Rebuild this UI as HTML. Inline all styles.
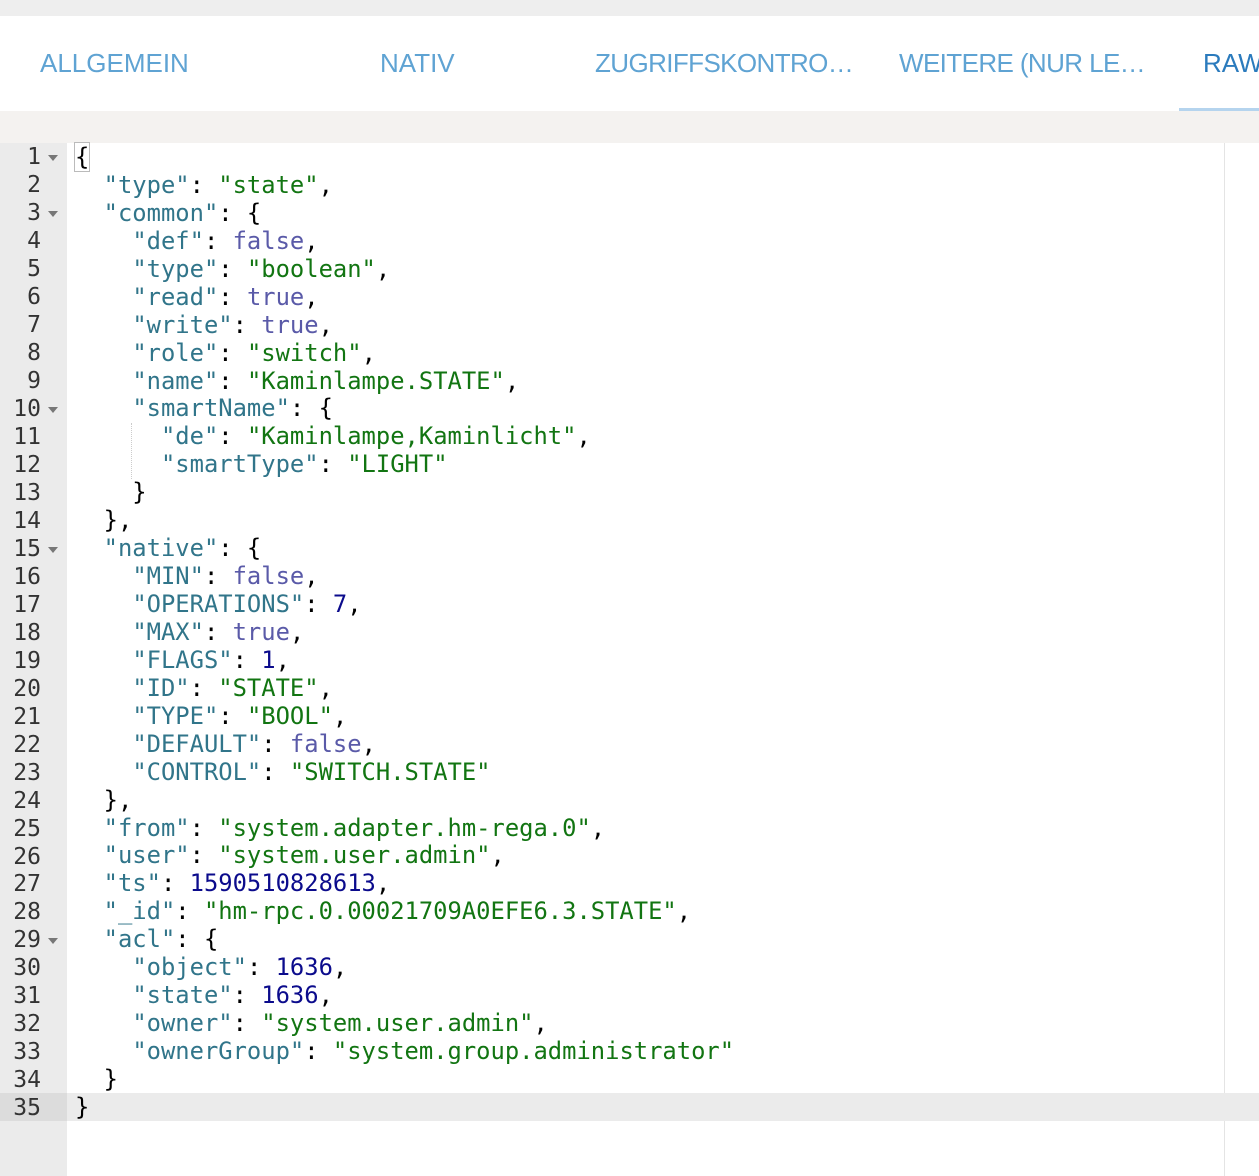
<!DOCTYPE html>
<html><head><meta charset="utf-8"><style>
body{margin:0;width:1259px;height:1176px;overflow:hidden;background:#fff;position:relative;font-family:"Liberation Sans",sans-serif}
.top{position:absolute;left:0;top:0;width:1259px;height:16px;background:#eeeeee}
.tab{position:absolute;top:45px;font-size:26px;color:#5fa3d3;white-space:nowrap;line-height:36px}
.band{position:absolute;left:0;top:111px;width:1259px;height:32px;background:#f4f2f0}
.ind{position:absolute;left:1179px;top:108px;width:80px;height:3px;background:#b5d4ee}
.gut{position:absolute;left:0;top:143px;width:67px;height:1033px;background:#ebebeb}
.margin{position:absolute;left:1224px;top:143px;width:1px;height:1033px;background:#e4e4e4}
.act{position:absolute;left:67px;top:1093px;width:1192px;height:28px;background:#ebebeb}
.actg{position:absolute;left:0;top:1093px;width:67px;height:28px;background:#dcdcdc}
.ln{position:absolute;left:0;width:41px;text-align:right;font-family:"DejaVu Sans Mono",monospace;font-size:23px;color:#333;line-height:28px}
.fold{position:absolute;left:48px;width:0;height:0;border-left:5px solid transparent;border-right:5px solid transparent;border-top:6px solid #777}
pre{position:absolute;left:75px;top:144px;margin:0;font-family:"DejaVu Sans Mono",monospace;font-size:23.8px;line-height:27.94px;color:#000}
.k{color:#31758a}.s{color:#127512}.b{color:#5a5aa8}.n{color:#0b0b8c}
.guide{position:absolute;left:131px;top:423px;height:56px;border-left:1px dotted #ccc}
</style></head><body>
<div class="top"></div>
<div class="tab" style="left:40px">ALLGEMEIN</div>
<div class="tab" style="left:380px">NATIV</div>
<div class="tab" style="left:595px;letter-spacing:-0.6px">ZUGRIFFSKONTRO…</div>
<div class="tab" style="left:899px;letter-spacing:-0.6px">WEITERE (NUR LE…</div>
<div class="tab" style="left:1203px;color:#2b7bbd">RAW</div>
<div class="ind"></div>
<div class="band"></div>
<div class="gut"></div>
<div class="margin"></div>
<div class="act"></div><div class="actg"></div>
<div class="guide"></div>
<pre><span style="outline:1px solid #bbb">{</span>
  <span class="k">"type"</span>: <span class="s">"state"</span>,
  <span class="k">"common"</span>: {
    <span class="k">"def"</span>: <span class="b">false</span>,
    <span class="k">"type"</span>: <span class="s">"boolean"</span>,
    <span class="k">"read"</span>: <span class="b">true</span>,
    <span class="k">"write"</span>: <span class="b">true</span>,
    <span class="k">"role"</span>: <span class="s">"switch"</span>,
    <span class="k">"name"</span>: <span class="s">"Kaminlampe.STATE"</span>,
    <span class="k">"smartName"</span>: {
      <span class="k">"de"</span>: <span class="s">"Kaminlampe,Kaminlicht"</span>,
      <span class="k">"smartType"</span>: <span class="s">"LIGHT"</span>
    }
  },
  <span class="k">"native"</span>: {
    <span class="k">"MIN"</span>: <span class="b">false</span>,
    <span class="k">"OPERATIONS"</span>: <span class="n">7</span>,
    <span class="k">"MAX"</span>: <span class="b">true</span>,
    <span class="k">"FLAGS"</span>: <span class="n">1</span>,
    <span class="k">"ID"</span>: <span class="s">"STATE"</span>,
    <span class="k">"TYPE"</span>: <span class="s">"BOOL"</span>,
    <span class="k">"DEFAULT"</span>: <span class="b">false</span>,
    <span class="k">"CONTROL"</span>: <span class="s">"SWITCH.STATE"</span>
  },
  <span class="k">"from"</span>: <span class="s">"system.adapter.hm-rega.0"</span>,
  <span class="k">"user"</span>: <span class="s">"system.user.admin"</span>,
  <span class="k">"ts"</span>: <span class="n">1590510828613</span>,
  <span class="k">"_id"</span>: <span class="s">"hm-rpc.0.00021709A0EFE6.3.STATE"</span>,
  <span class="k">"acl"</span>: {
    <span class="k">"object"</span>: <span class="n">1636</span>,
    <span class="k">"state"</span>: <span class="n">1636</span>,
    <span class="k">"owner"</span>: <span class="s">"system.user.admin"</span>,
    <span class="k">"ownerGroup"</span>: <span class="s">"system.group.administrator"</span>
  }
}</pre>
<div class="ln" style="top:143px">1</div><div class="ln" style="top:171px">2</div><div class="ln" style="top:199px">3</div><div class="ln" style="top:227px">4</div><div class="ln" style="top:255px">5</div><div class="ln" style="top:283px">6</div><div class="ln" style="top:311px">7</div><div class="ln" style="top:339px">8</div><div class="ln" style="top:367px">9</div><div class="ln" style="top:395px">10</div><div class="ln" style="top:423px">11</div><div class="ln" style="top:451px">12</div><div class="ln" style="top:479px">13</div><div class="ln" style="top:507px">14</div><div class="ln" style="top:535px">15</div><div class="ln" style="top:563px">16</div><div class="ln" style="top:591px">17</div><div class="ln" style="top:619px">18</div><div class="ln" style="top:647px">19</div><div class="ln" style="top:675px">20</div><div class="ln" style="top:703px">21</div><div class="ln" style="top:731px">22</div><div class="ln" style="top:759px">23</div><div class="ln" style="top:787px">24</div><div class="ln" style="top:815px">25</div><div class="ln" style="top:843px">26</div><div class="ln" style="top:870px">27</div><div class="ln" style="top:898px">28</div><div class="ln" style="top:926px">29</div><div class="ln" style="top:954px">30</div><div class="ln" style="top:982px">31</div><div class="ln" style="top:1010px">32</div><div class="ln" style="top:1038px">33</div><div class="ln" style="top:1066px">34</div><div class="ln" style="top:1094px">35</div>
<div class="fold" style="top:155px"></div><div class="fold" style="top:211px"></div><div class="fold" style="top:407px"></div><div class="fold" style="top:547px"></div><div class="fold" style="top:938px"></div>
</body></html>
